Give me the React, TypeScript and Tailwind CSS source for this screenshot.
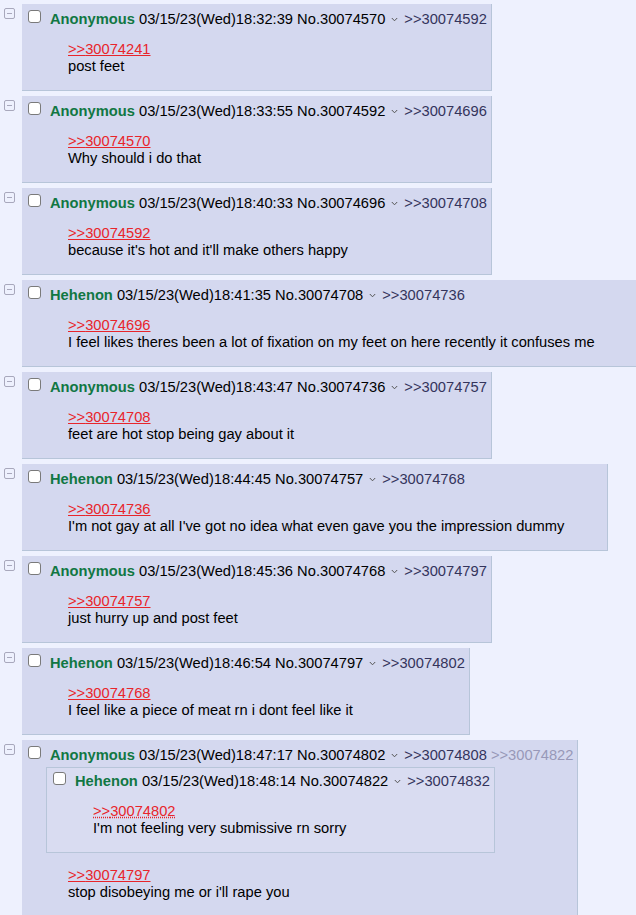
import React from 'react';

// Types for a thread post and its inlined quotes
type Post = {
  name: string;
  time: string;
  no: string;
  backlinks: string[];
  fadedLinks?: string[];
  quote: string;
  body: string;
  inline?: Post;
  dashedQuote?: boolean;
};

const posts: Post[] = [
  { name: 'Anonymous', time: '03/15/23(Wed)18:32:39', no: '30074570', backlinks: ['30074592'], quote: '30074241', body: 'post feet' },
  { name: 'Anonymous', time: '03/15/23(Wed)18:33:55', no: '30074592', backlinks: ['30074696'], quote: '30074570', body: 'Why should i do that' },
  { name: 'Anonymous', time: '03/15/23(Wed)18:40:33', no: '30074696', backlinks: ['30074708'], quote: '30074592', body: "because it's hot and it'll make others happy" },
  { name: 'Hehenon', time: '03/15/23(Wed)18:41:35', no: '30074708', backlinks: ['30074736'], quote: '30074696', body: 'I feel likes theres been a lot of fixation on my feet on here recently it confuses me' },
  { name: 'Anonymous', time: '03/15/23(Wed)18:43:47', no: '30074736', backlinks: ['30074757'], quote: '30074708', body: 'feet are hot stop being gay about it' },
  { name: 'Hehenon', time: '03/15/23(Wed)18:44:45', no: '30074757', backlinks: ['30074768'], quote: '30074736', body: "I'm not gay at all I've got no idea what even gave you the impression dummy" },
  { name: 'Anonymous', time: '03/15/23(Wed)18:45:36', no: '30074768', backlinks: ['30074797'], quote: '30074757', body: 'just hurry up and post feet' },
  { name: 'Hehenon', time: '03/15/23(Wed)18:46:54', no: '30074797', backlinks: ['30074802'], quote: '30074768', body: 'I feel like a piece of meat rn i dont feel like it' },
  {
    name: 'Anonymous',
    time: '03/15/23(Wed)18:47:17',
    no: '30074802',
    backlinks: ['30074808'],
    fadedLinks: ['30074822'],
    quote: '30074797',
    body: "stop disobeying me or i'll rape you",
    inline: {
      name: 'Hehenon',
      time: '03/15/23(Wed)18:48:14',
      no: '30074822',
      backlinks: ['30074832'],
      quote: '30074802',
      body: "I'm not feeling very submissive rn sorry",
      dashedQuote: true,
    },
  },
];

const Checkbox = () => (
  <span className="block w-[13px] h-[13px] shrink-0 rounded-[3px] border border-[#7a7a7a] bg-white" />
);

const Chevron = () => (
  <svg width="7" height="5" viewBox="0 0 7 5" className="inline-block mx-[6px] mb-[1px]">
    <polyline points="0.8,1 3.5,3.8 6.2,1" fill="none" stroke="#555" strokeWidth="1" />
  </svg>
);

const Header = ({ post }: { post: Post }) => (
  <div className="flex items-start h-[17px] pl-[4px] pr-[1px]">
    <Checkbox />
    <div className="ml-[9px] mt-[1px] leading-[17px] text-black">
      <span className="font-bold text-[#117743]">{post.name}</span> {post.time} No.{post.no}
      <Chevron />
      {post.backlinks.map((b) => (
        <span key={b} className="text-[#34345c]">&gt;&gt;{b}</span>
      ))}
      {post.fadedLinks?.map((b) => (
        <span key={b} className="text-[#9898b8]"> &gt;&gt;{b}</span>
      ))}
    </div>
  </div>
);

const Message = ({ post }: { post: Post }) => (
  <div className="mt-[14px] mb-[15px] ml-[44px] mr-[40px] leading-[17px]">
    <div>
      <span
        className={
          post.dashedQuote
            ? 'text-[#e8252b] underline decoration-dotted decoration-[#e8252b]'
            : 'text-[#e8252b] underline decoration-[#e8252b]'
        }
      >
        &gt;&gt;{post.quote}
      </span>
    </div>
    <div className="text-black">{post.body}</div>
  </div>
);

const Reply = ({ post }: { post: Post }) => (
  <div className="flex">
    <div className="w-[22px] shrink-0 pl-[4px] pt-[4px]">
      <span className="flex items-center justify-center w-[11px] h-[11px] rounded-[2px] border border-[#a8a8bc]">
        <span className="block w-[5px] h-px bg-[#a8a8bc]" />
      </span>
    </div>
    <div className="bg-[#d4d8ef] border-r border-b border-[#b7c5d9] pt-[6px] pl-[2px] pr-[3px]">
      <Header post={post} />
      {post.inline && (
        <div className="mt-[4px] ml-[22px] w-fit bg-[#d9dcf1] border border-[#b7c5d9] pt-[4px] pl-[2px] pr-[3px]">
          <Header post={post.inline} />
          <Message post={post.inline} />
        </div>
      )}
      <Message post={post} />
    </div>
  </div>
);

export default function App() {
  return (
    <div
      className="min-h-[915px] w-[636px] overflow-hidden bg-[#eef1fe] pt-[4px] flex flex-col items-start gap-[5px] whitespace-nowrap text-[14.7px]"
      style={{ fontFamily: '"Liberation Sans", Arial, sans-serif' }}
    >
      {posts.map((p) => (
        <Reply key={p.no} post={p} />
      ))}
    </div>
  );
}
